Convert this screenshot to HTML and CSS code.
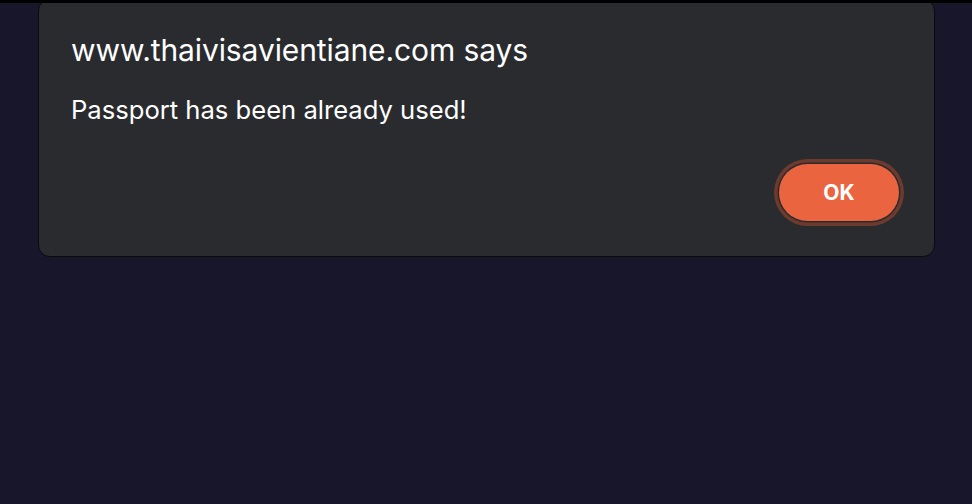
FILE: index.html
```html
<!DOCTYPE html>
<html lang="en">
<head>
<meta charset="utf-8">
<title>Alert</title>
<link rel="stylesheet" href="styles.css">
</head>
<body>
<div class="topbar"></div>
<div class="dialog" role="alertdialog">
  <h1 class="title">www.thaivisavientiane.com says</h1>
  <p class="message">Passport has been already used!</p>
  <div class="actions">
    <button class="ok">OK</button>
  </div>
</div>
</body>
</html>
```

FILE: styles.css
```css
html, body {
  margin: 0;
  padding: 0;
}
body {
  background: #17162b;
  width: 972px;
  height: 504px;
  overflow: hidden;
  font-family: Inter, "Noto Sans", sans-serif;
  color: #fff;
}
.topbar {
  position: fixed;
  top: 0;
  left: 0;
  right: 0;
  height: 3px;
  background: #000;
  z-index: 2;
}
.dialog {
  margin: -1px 37px 0 38px;
  height: 258px;
  box-sizing: border-box;
  background: #2a2b2f;
  border: 1px solid #0b0b0d;
  border-radius: 12px;
  padding: 32px 35px 35px 32px;
  display: flex;
  flex-direction: column;
}
.title {
  margin: 0;
  font-size: 30px;
  font-weight: 400;
  line-height: 36px;
  letter-spacing: -0.1px;
}
.message {
  margin: 26px 0 0;
  font-size: 25.6px;
  line-height: 32px;
}
.actions {
  margin-top: auto;
  display: flex;
  justify-content: flex-end;
}
.ok {
  width: 120px;
  height: 57px;
  border: none;
  border-radius: 29px;
  background: #ea6440;
  color: #fff;
  font-family: Inter, "Noto Sans", sans-serif;
  font-weight: 700;
  font-size: 21px;
  box-shadow: 0 0 0 1.5px #2a2b2f, 0 0 0 5px #6d3a2e;
  padding: 0;
}
```
